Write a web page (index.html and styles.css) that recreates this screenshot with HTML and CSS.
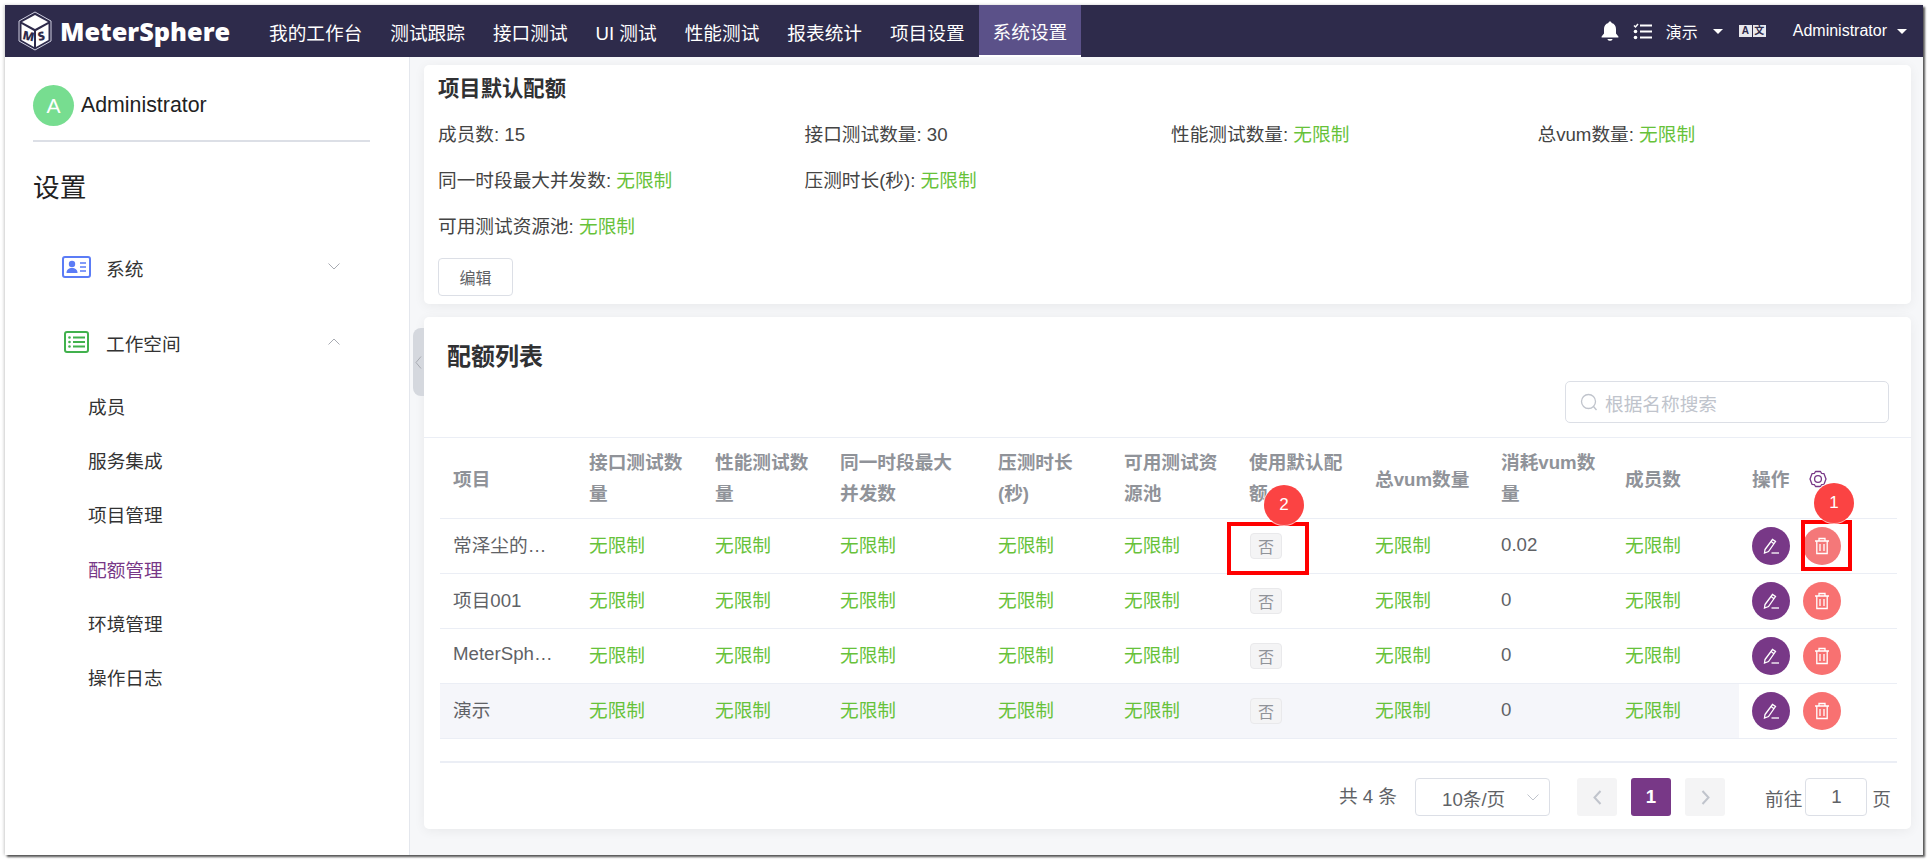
FILE: index.html
```html
<!DOCTYPE html>
<html lang="zh-CN">

<head>
    <meta charset="UTF-8">
    <title>MeterSphere</title>
    <link rel="stylesheet" href="styles.css">
</head>

<body>
    <div class="frame">

        <header class="topbar">
            <div class="logo">
                <svg class="logo-cube" viewBox="0 0 34 40" width="34" height="40">
                    <path d="M17 1 33 10V30L17 39 1 30V10Z" fill="none" stroke="#cfcfe0" stroke-width="1"/>
                    <path d="M17 4 30 11 17 18 4 11Z" fill="#fff"/>
                    <path d="M3.500 13 16 20V36L3.500 29Z" fill="#fff"/>
                    <path d="M30.500 13 18 20V36L30.500 29Z" fill="#fff"/>
                    <text class="logo-m" x="4.500" y="29" transform="rotate(12 9 26)">M</text>
                    <text class="logo-s" x="20" y="29" transform="rotate(-12 25 26)">S</text>
                </svg>
                <span class="logo-name">MeterSphere</span>
            </div>
            <nav class="nav">
                <a class="nav-item">我的工作台</a>
                <a class="nav-item">测试跟踪</a>
                <a class="nav-item">接口测试</a>
                <a class="nav-item">UI 测试</a>
                <a class="nav-item">性能测试</a>
                <a class="nav-item">报表统计</a>
                <a class="nav-item">项目设置</a>
                <a class="nav-item active">系统设置</a>
            </nav>
            <div class="top-tools">
                <svg class="tool-bell" viewBox="0 0 18 20" width="18" height="20">
                    <path d="M9 0.500c1 0 1.600 0.700 1.600 1.600 2.900 0.700 4.400 3 4.400 6v4.400l2.400 3v1H0.600v-1L3 12.500V8.100c0-3 1.500-5.300 4.400-6C7.400 1.200 8 0.500 9 0.500Z" fill="#fff"/>
                    <path d="M6.500 18h5c0 1-1 1.800-2.500 1.800S6.500 19 6.500 18Z" fill="#fff"/>
                </svg>
                <svg class="tool-list" viewBox="0 0 19 17" width="19" height="17">
                    <path d="M1 2.500 2.500 4 5 1M1 8.500" fill="none" stroke="#fff" stroke-width="1.500"/>
                    <path d="M7 2.500H19M7 8.500H19M7 14.500H19" stroke="#fff" stroke-width="2.200"/>
                    <circle cx="2.500" cy="8.500" r="1.800" fill="#fff"/>
                    <circle cx="2.500" cy="14.500" r="1.800" fill="#fff"/>
                </svg>
                <span class="tool-text project">演示</span>
                <i class="caret"></i>
                <span class="lang-icon"><b class="lang-a">A</b><b class="lang-b">文</b></span>
                <span class="tool-text user">Administrator</span>
                <i class="caret"></i>
            </div>
        </header>

        <div class="layout">
            <aside class="side">
                <div class="user-row">
                    <span class="avatar">A</span>
                    <span class="user-name">Administrator</span>
                </div>
                <div class="side-line"></div>
                <h2 class="side-title">设置</h2>

                <div class="menu-head first">
                    <svg class="menu-icon" viewBox="0 0 29 22" width="29" height="22">
                        <rect x="1" y="1" width="27" height="20" rx="2" fill="#fff" stroke="#5b7cf6" stroke-width="2"/>
                        <circle cx="10" cy="8" r="3.200" fill="#5b7cf6"/>
                        <path d="M4.500 17c0-3.500 2.300-5 5.500-5s5.500 1.500 5.500 5Z" fill="#5b7cf6"/>
                        <path d="M18 7h6M18 11h6M18 15h6" stroke="#5b7cf6" stroke-width="1.500"/>
                    </svg>
                    <span>系统</span>
                    <svg class="menu-arrow" viewBox="0 0 12 7" width="12" height="7"><path d="M0.500 0.500 6 6 11.500 0.500" fill="none" stroke="#a8abb2"/></svg>
                </div>

                <div class="menu-head second">
                    <svg class="menu-icon green" viewBox="0 0 25 22" width="25" height="22">
                        <rect x="1" y="1" width="23" height="20" rx="2" fill="#fff" stroke="#41b14d" stroke-width="2"/>
                        <path d="M9 6.500h12M9 11h12M9 15.500h12" stroke="#41b14d" stroke-width="2"/>
                        <circle cx="5.500" cy="6.500" r="1.300" fill="#41b14d"/>
                        <circle cx="5.500" cy="11" r="1.300" fill="#41b14d"/>
                        <circle cx="5.500" cy="15.500" r="1.300" fill="#41b14d"/>
                    </svg>
                    <span>工作空间</span>
                    <svg class="menu-arrow" viewBox="0 0 12 7" width="12" height="7"><path d="M0.500 6.500 6 1 11.500 6.500" fill="none" stroke="#a8abb2"/></svg>
                </div>

                <ul class="sub-menu">
                    <li>成员</li>
                    <li>服务集成</li>
                    <li>项目管理</li>
                    <li class="current">配额管理</li>
                    <li>环境管理</li>
                    <li>操作日志</li>
                </ul>
            </aside>

            <main class="main">
                <div class="handle">
                    <svg viewBox="0 0 7 13" width="7" height="13"><path d="M6 0.500 1 6.500 6 12.500" fill="none" stroke="#a8abb2"/></svg>
                </div>

                <section class="card default-card">
                    <h3 class="default-title">项目默认配额</h3>
                    <div class="quota-grid">
                        <div>成员数: 15</div>
                        <div>接口测试数量: 30</div>
                        <div>性能测试数量: <span class="ok">无限制</span></div>
                        <div>总vum数量: <span class="ok">无限制</span></div>
                        <div>同一时段最大并发数: <span class="ok">无限制</span></div>
                        <div>压测时长(秒): <span class="ok">无限制</span></div>
                        <div class="full">可用测试资源池: <span class="ok">无限制</span></div>
                    </div>
                    <button class="edit-btn">编辑</button>
                </section>

                <section class="card list-card">
                    <div class="list-head">
                        <h3 class="list-title">配额列表</h3>
                        <div class="search">
                            <svg viewBox="0 0 18 19" width="18" height="19"><circle cx="8.500" cy="8.500" r="7" fill="none" stroke="#c0c4cc" stroke-width="1.300"/><path d="M13.500 13.500 16.500 17" stroke="#c0c4cc" stroke-width="1.300"/></svg>
                            <span>根据名称搜索</span>
                        </div>
                    </div>

                    <div class="table-wrap">
                        <table class="quota-table">
                            <colgroup>
                                <col class="c1"><col class="c2"><col class="c3"><col class="c4"><col class="c5"><col class="c6"><col class="c7"><col class="c8"><col class="c9"><col class="c10"><col class="c11">
                            </colgroup>
                            <thead>
                                <tr>
                                    <th class="single">项目</th>
                                    <th>接口测试数量</th>
                                    <th>性能测试数量</th>
                                    <th>同一时段最大<br>并发数</th>
                                    <th>压测时长(秒)</th>
                                    <th>可用测试资源池</th>
                                    <th>使用默认配<br>额</th>
                                    <th class="single">总vum数量</th>
                                    <th>消耗vum数量</th>
                                    <th class="single">成员数</th>
                                    <th class="single">
                                        <div class="op-head">操作
                                            <svg viewBox="0 0 18 18" width="18" height="18"><path d="M6.500 1.500H11.500L12.500 3.300 15 3.700 17 9 15 14.300 12.500 14.700 11.500 16.500H6.500L5.500 14.700 3 14.300 1 9 3 3.700 5.500 3.300Z" fill="none" stroke="#783887" stroke-width="1.300" stroke-linejoin="round"/><circle cx="9" cy="9" r="3.400" fill="none" stroke="#783887" stroke-width="1.300"/></svg>
                                        </div>
                                    </th>
                                </tr>
                            </thead>
                            <tbody>
                                <tr>
                                    <td class="name">常泽尘的…</td>
                                    <td class="ok">无限制</td><td class="ok">无限制</td><td class="ok">无限制</td><td class="ok">无限制</td><td class="ok">无限制</td>
                                    <td><span class="tag">否</span></td>
                                    <td class="ok">无限制</td>
                                    <td class="num">0.02</td>
                                    <td class="ok">无限制</td>
                                    <td>
                                        <div class="ops">
                                            <span class="round edit"><svg viewBox="0 0 18 18" width="18" height="18"><path d="M3 12.500 10.500 2.500 13.500 4.500 6.500 14.500 2.500 16Z M9 4.500 12 6.800" fill="none" stroke="#fff" stroke-width="1.300"/><path d="M9.500 16H17" stroke="#fff" stroke-width="1.300"/></svg></span>
                                            <span class="round del light"><svg viewBox="0 0 16 18" width="16" height="18"><path d="M1 4H15M5 4V1.500H11V4M2.800 4V16.500H13.200V4M6 7V14M10 7V14" fill="none" stroke="#fff" stroke-width="1.300"/></svg></span>
                                        </div>
                                    </td>
                                </tr>
                                <tr>
                                    <td class="name">项目001</td>
                                    <td class="ok">无限制</td><td class="ok">无限制</td><td class="ok">无限制</td><td class="ok">无限制</td><td class="ok">无限制</td>
                                    <td><span class="tag">否</span></td>
                                    <td class="ok">无限制</td>
                                    <td class="num">0</td>
                                    <td class="ok">无限制</td>
                                    <td>
                                        <div class="ops">
                                            <span class="round edit"><svg viewBox="0 0 18 18" width="18" height="18"><path d="M3 12.500 10.500 2.500 13.500 4.500 6.500 14.500 2.500 16Z M9 4.500 12 6.800" fill="none" stroke="#fff" stroke-width="1.300"/><path d="M9.500 16H17" stroke="#fff" stroke-width="1.300"/></svg></span>
                                            <span class="round del"><svg viewBox="0 0 16 18" width="16" height="18"><path d="M1 4H15M5 4V1.500H11V4M2.800 4V16.500H13.200V4M6 7V14M10 7V14" fill="none" stroke="#fff" stroke-width="1.300"/></svg></span>
                                        </div>
                                    </td>
                                </tr>
                                <tr>
                                    <td class="name">MeterSph…</td>
                                    <td class="ok">无限制</td><td class="ok">无限制</td><td class="ok">无限制</td><td class="ok">无限制</td><td class="ok">无限制</td>
                                    <td><span class="tag">否</span></td>
                                    <td class="ok">无限制</td>
                                    <td class="num">0</td>
                                    <td class="ok">无限制</td>
                                    <td>
                                        <div class="ops">
                                            <span class="round edit"><svg viewBox="0 0 18 18" width="18" height="18"><path d="M3 12.500 10.500 2.500 13.500 4.500 6.500 14.500 2.500 16Z M9 4.500 12 6.800" fill="none" stroke="#fff" stroke-width="1.300"/><path d="M9.500 16H17" stroke="#fff" stroke-width="1.300"/></svg></span>
                                            <span class="round del"><svg viewBox="0 0 16 18" width="16" height="18"><path d="M1 4H15M5 4V1.500H11V4M2.800 4V16.500H13.200V4M6 7V14M10 7V14" fill="none" stroke="#fff" stroke-width="1.300"/></svg></span>
                                        </div>
                                    </td>
                                </tr>
                                <tr class="hover">
                                    <td class="name">演示</td>
                                    <td class="ok">无限制</td><td class="ok">无限制</td><td class="ok">无限制</td><td class="ok">无限制</td><td class="ok">无限制</td>
                                    <td><span class="tag">否</span></td>
                                    <td class="ok">无限制</td>
                                    <td class="num">0</td>
                                    <td class="ok">无限制</td>
                                    <td class="fixed">
                                        <div class="ops">
                                            <span class="round edit"><svg viewBox="0 0 18 18" width="18" height="18"><path d="M3 12.500 10.500 2.500 13.500 4.500 6.500 14.500 2.500 16Z M9 4.500 12 6.800" fill="none" stroke="#fff" stroke-width="1.300"/><path d="M9.500 16H17" stroke="#fff" stroke-width="1.300"/></svg></span>
                                            <span class="round del"><svg viewBox="0 0 16 18" width="16" height="18"><path d="M1 4H15M5 4V1.500H11V4M2.800 4V16.500H13.200V4M6 7V14M10 7V14" fill="none" stroke="#fff" stroke-width="1.300"/></svg></span>
                                        </div>
                                    </td>
                                </tr>
                            </tbody>
                        </table>
                    </div>

                    <div class="pager">
                        <span class="total">共 4 条</span>
                        <div class="page-size">
                            <span>10条/页</span>
                            <svg viewBox="0 0 12 7" width="12" height="7"><path d="M0.500 0.500 6 6 11.500 0.500" fill="none" stroke="#c0c4cc"/></svg>
                        </div>
                        <span class="page-btn prev"><svg viewBox="0 0 9 15" width="9" height="15"><path d="M7.500 1 1.500 7.500 7.500 14" fill="none" stroke="#c0c4cc" stroke-width="2"/></svg></span>
                        <span class="page-btn current">1</span>
                        <span class="page-btn next"><svg viewBox="0 0 9 15" width="9" height="15"><path d="M1.500 1 7.500 7.500 1.500 14" fill="none" stroke="#c0c4cc" stroke-width="2"/></svg></span>
                        <span class="goto">前往</span>
                        <span class="goto-input">1</span>
                        <span class="goto-end">页</span>
                    </div>
                </section>
            </main>
        </div>

        <!-- red marks drawn over the screenshot -->
        <div class="mark mark-del"></div>
        <div class="mark mark-tag"></div>
        <div class="badge badge-del">1</div>
        <div class="badge badge-tag">2</div>
    </div>
</body>

</html>
```

FILE: styles.css
```css
* {
    box-sizing: border-box;
}

html,
body {
    height: 100%;
    overflow: hidden;
}

body {
    margin: 0;
    padding: 5px;
    background-color: #fff;
    font-family: "Liberation Sans", "Noto Sans CJK SC", sans-serif;
    font-size: 18.67px;
    color: #606266;
}

.frame {
    position: relative;
    width: 1918px;
    height: 850px;
    display: flex;
    flex-direction: column;
    background-color: #fff;
    box-shadow: 2px 2px 2px #555, -1px 0 3px #ccc;
}

/* top bar */
.topbar {
    height: 52px;
    flex: none;
    display: flex;
    align-items: stretch;
    background-color: #2e2b4b;
    color: #fff;
}

.logo {
    width: 250px;
    flex: none;
    display: flex;
    align-items: center;
    padding-left: 13px;
    gap: 8px;
}

.logo-m,
.logo-s {
    font-family: "Open Sans", sans-serif;
    font-weight: 800;
    font-size: 12px;
    fill: #2e2b4b;
}

.logo-name {
    font-family: "Open Sans", sans-serif;
    font-weight: 800;
    font-size: 25.300px;
    line-height: 50px;
}

.nav {
    display: flex;
}

.nav-item {
    display: flex;
    align-items: center;
    padding: 0 14px;
    color: #fff;
}

.nav-item.active {
    background-color: #5b5189;
    border-bottom: 2px solid #fff;
}

.top-tools {
    margin-left: auto;
    display: flex;
    align-items: center;
    font-size: 16px;
    padding-right: 16px;
}

.tool-list {
    margin-left: 14px;
}

.project {
    margin-left: 14px;
}

.caret {
    width: 0;
    height: 0;
    margin-left: 15px;
    border-left: 5px solid transparent;
    border-right: 5px solid transparent;
    border-top: 5px solid #fff;
}

.lang-icon {
    margin-left: 16px;
    display: flex;
    gap: 1px;
}

.lang-icon b {
    width: 13px;
    height: 12px;
    display: flex;
    align-items: center;
    justify-content: center;
    background-color: #e8e8ee;
    color: #2e2b4b;
    font-size: 10px;
    line-height: 12px;
}

.user {
    margin-left: 27px;
}

.user + .caret {
    margin-left: 10px;
}

/* left side */
.layout {
    flex: 1;
    display: flex;
    min-height: 0;
}

.side {
    width: 405px;
    flex: none;
    border-right: 1px solid #e4e7ed;
    padding: 28px 69px 0 28px;
}

.user-row {
    display: flex;
    align-items: center;
    gap: 7px;
}

.avatar {
    width: 41px;
    height: 41px;
    border-radius: 50%;
    background-color: #77dd90;
    color: #fff;
    font-size: 21px;
    display: flex;
    align-items: center;
    justify-content: center;
}

.user-name {
    font-size: 21.33px;
    color: #222;
}

.side-line {
    height: 2px;
    width: 337px;
    margin-top: 14px;
    background-color: #dcdfe6;
}

.side-title {
    margin: 26px 0 0;
    height: 40px;
    line-height: 40px;
    font-size: 26.67px;
    font-weight: 400;
    color: #222;
}

.menu-head {
    height: 54px;
    display: flex;
    align-items: center;
    padding-left: 29px;
    color: #333;
}

.menu-head.first {
    margin-top: 32px;
}

.menu-head.second {
    margin-top: 21px;
}

.menu-icon {
    margin-right: 15px;
}

.menu-icon.green {
    margin-left: 2px;
    margin-right: 17px;
}

.menu-arrow {
    margin-left: auto;
    margin-top: -2px;
}

.sub-menu {
    list-style: none;
    margin: 12px 0 0;
    padding: 0 0 0 55px;
    color: #333;
}

.sub-menu li {
    height: 54.2px;
    line-height: 54.2px;
}

.sub-menu .current {
    color: #783887;
}

/* right side */
.main {
    position: relative;
    flex: 1;
    min-width: 0;
    padding: 8px 12px 0 14px;
    background-color: #f6f7f9;
}

.handle {
    position: absolute;
    left: 3px;
    top: 271px;
    width: 11px;
    height: 68px;
    display: flex;
    align-items: center;
    justify-content: center;
    background-color: #d5d8de;
    border-radius: 8px 0 0 8px;
}

.card {
    background-color: #fff;
    border-radius: 5px;
    box-shadow: 0 2px 12px rgba(0, 0, 0, 0.06);
}

.default-card {
    height: 239px;
    padding: 9px 14px 8px;
}

.default-title {
    margin: 0;
    height: 30px;
    line-height: 30px;
    font-size: 21.33px;
    font-weight: bold;
    color: #303133;
}

.quota-grid {
    margin-top: 5.500px;
    display: grid;
    grid-template-columns: repeat(4, 366.5px);
    grid-auto-rows: 46px;
    align-items: center;
    color: #444;
}

.quota-grid .full {
    grid-column: 1;
}

.ok {
    color: #67c23a;
}

.edit-btn {
    display: block;
    margin-top: 10.500px;
    width: 75px;
    height: 38px;
    padding: 0;
    background-color: #fff;
    border: 1px solid #dcdfe6;
    border-radius: 4px;
    font-family: inherit;
    font-size: 16px;
    color: #606266;
}

.list-card {
    margin-top: 13px;
    height: 512px;
}

.list-head {
    height: 121px;
    display: flex;
    flex-direction: column;
    padding: 24px 22px 0 23px;
    border-bottom: 1px solid #ebeef5;
}

.list-title {
    margin: 0;
    height: 32px;
    line-height: 32px;
    font-size: 24px;
    font-weight: bold;
    color: #303133;
}

.search {
    margin-top: 8px;
    align-self: flex-end;
    width: 324px;
    height: 42px;
    display: flex;
    align-items: center;
    gap: 7px;
    padding-left: 14px;
    border: 1px solid #dcdfe6;
    border-radius: 5px;
    color: #c0c4cc;
}

.table-wrap {
    padding: 0 14px 0 16px;
}

.quota-table {
    width: 100%;
    table-layout: fixed;
    border-collapse: collapse;
}

.c1 { width: 136px; }
.c2 { width: 126px; }
.c3 { width: 125px; }
.c4 { width: 158px; }
.c5 { width: 126px; }
.c6 { width: 125px; }
.c7 { width: 126px; }
.c8 { width: 126px; }
.c9 { width: 124px; }
.c10 { width: 127px; }
.c11 { width: 158px; }

.quota-table th,
.quota-table td {
    padding: 0 13px;
    text-align: left;
    vertical-align: middle;
    border-bottom: 1px solid #ebeef5;
}

.quota-table th {
    height: 80px;
    line-height: 31px;
    font-weight: bold;
    color: #909399;
}

.quota-table th.single {
    padding-top: 3px;
}

.quota-table td {
    height: 55px;
}

/* CJK metrics sit low in the cell, lift the plain text cells */
.quota-table td.ok,
.quota-table td.name {
    padding-bottom: 4px;
}

.quota-table td.num {
    padding-bottom: 2px;
}

.quota-table .name {
    white-space: nowrap;
}

.hover td {
    background-color: #f5f6fa;
}

.hover .fixed {
    background-color: #fff;
}

.op-head {
    display: flex;
    align-items: center;
    gap: 20px;
}

.tag {
    display: inline-flex;
    width: 32px;
    height: 26px;
    margin-left: 1px;
    align-items: center;
    justify-content: center;
    vertical-align: middle;
    background-color: #f4f4f5;
    border: 1px solid #e9e9eb;
    border-radius: 4px;
    color: #909399;
    font-size: 16px;
}

.ops {
    display: flex;
    gap: 13px;
}

.round {
    width: 38px;
    height: 38px;
    border-radius: 50%;
    display: flex;
    align-items: center;
    justify-content: center;
}

.round.edit {
    background-color: #783887;
}

.round.del {
    background-color: #f87171;
}

.round.del.light {
    background-color: #f47879;
}

.pager {
    margin: 22px 14px 0 16px;
    padding-top: 16px;
    padding-right: 6px;
    border-top: 2px solid #ebeef5;
    display: flex;
    align-items: center;
    justify-content: flex-end;
    height: 55px;
}

.total {
    margin-right: 18px;
    margin-top: -6px;
    word-spacing: 0;
}

.page-size {
    width: 135px;
    height: 38px;
    display: flex;
    align-items: center;
    padding: 0 10px 0 26px;
    margin-right: 27px;
    border: 1px solid #dcdfe6;
    border-radius: 4px;
}

.page-size svg {
    margin-left: auto;
}

.page-btn {
    width: 40px;
    height: 38px;
    display: flex;
    align-items: center;
    justify-content: center;
    background-color: #f4f4f5;
    border-radius: 3px;
}

.page-btn.current {
    margin: 0 14px;
    background-color: #783887;
    color: #fff;
    font-weight: bold;
}

.goto {
    margin-left: 40px;
    margin-right: 3px;
}

.goto-input {
    width: 62px;
    height: 38px;
    display: flex;
    align-items: center;
    justify-content: center;
    border: 1px solid #dcdfe6;
    border-radius: 4px;
}

.goto-end {
    margin-left: 5px;
}

/* annotations on top of the page */
.mark {
    position: absolute;
    border: 4px solid #ff0000;
}

.mark-del {
    left: 1796px;
    top: 515px;
    width: 51px;
    height: 51px;
}

.mark-tag {
    left: 1222px;
    top: 517px;
    width: 82px;
    height: 53px;
}

.badge {
    position: absolute;
    width: 40px;
    height: 40px;
    border-radius: 50%;
    background-color: #fb4343;
    box-shadow: 0 0 0 1px rgba(255, 255, 255, 0.7);
    color: #fff;
    font-size: 17px;
    display: flex;
    align-items: center;
    justify-content: center;
}

.badge-del {
    left: 1809px;
    top: 478px;
}

.badge-tag {
    left: 1259px;
    top: 480px;
}
```
